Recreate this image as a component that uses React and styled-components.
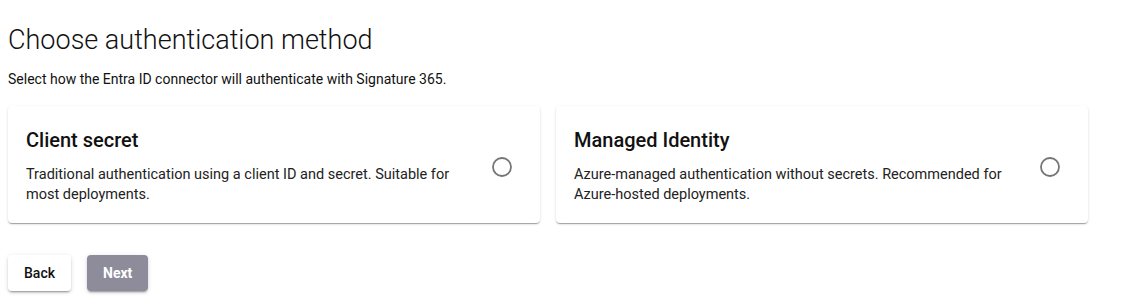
import React, { useState } from "react";
import styled, { createGlobalStyle } from "styled-components";

const GlobalStyle = createGlobalStyle`
  body {
    margin: 0;
    background: #ffffff;
    font-family: Roboto, "Liberation Sans", Arial, sans-serif;
    color: #111111;
  }
`;

const methods = [
  {
    id: "secret",
    title: "Client secret",
    text: "Traditional authentication using a client ID and secret. Suitable for most deployments.",
  },
  {
    id: "managed",
    title: "Managed Identity",
    text: "Azure-managed authentication without secrets. Recommended for Azure-hosted deployments.",
  },
];

const App = () => {
  const [selected, setSelected] = useState(null);

  return (
    <>
      <GlobalStyle />
      <Page>
        <Heading>Choose authentication method</Heading>
        <Intro>
          Select how the Entra ID connector will authenticate with Signature
          365.
        </Intro>
        <Cards>
          {methods.map((m) => (
            <Card key={m.id} onClick={() => setSelected(m.id)}>
              <CardBody>
                <CardTitle>{m.title}</CardTitle>
                <CardText>{m.text}</CardText>
              </CardBody>
              <Radio>
                <svg width="20" height="20" viewBox="0 0 20 20">
                  <circle
                    cx="10"
                    cy="10"
                    r="9"
                    fill="none"
                    stroke="#757575"
                    strokeWidth="1.8"
                  />
                  {selected === m.id && (
                    <circle cx="10" cy="10" r="5" fill="#757575" />
                  )}
                </svg>
              </Radio>
            </Card>
          ))}
        </Cards>
        <Actions>
          <Button>Back</Button>
          <Button primary disabled={!selected}>
            Next
          </Button>
        </Actions>
      </Page>
    </>
  );
};

const Page = styled.div`
  padding: 24px 8px 16px;
  width: 1080px;
`;
const Heading = styled.h1`
  margin: 0;
  font-size: 27px;
  font-weight: 300;
  line-height: 33px;
  color: #111;
`;
const Intro = styled.p`
  margin: 12px 0 0;
  font-size: 14px;
  line-height: 20px;
  color: #111;
`;
const Cards = styled.div`
  display: grid;
  grid-template-columns: 1fr 1fr;
  gap: 16px;
  margin-top: 17px;
`;
const Card = styled.div`
  display: flex;
  align-items: center;
  background: #fff;
  border-radius: 4px;
  padding: 22px 28px 18px 18px;
  box-shadow: 0 2px 1px -1px rgba(0, 0, 0, 0.2), 0 1px 1px 0 rgba(0, 0, 0, 0.14),
    0 1px 3px 0 rgba(0, 0, 0, 0.12);
  cursor: pointer;
`;
const CardBody = styled.div`
  flex: 1;
  padding-right: 20px;
`;
const CardTitle = styled.div`
  font-size: 20px;
  font-weight: 500;
  line-height: 24px;
  color: #111;
`;
const CardText = styled.div`
  margin-top: 13px;
  font-size: 14.5px;
  line-height: 20px;
  color: #222;
`;
const Radio = styled.span`
  display: flex;
  width: 20px;
  height: 20px;
`;
const Actions = styled.div`
  display: flex;
  gap: 16px;
  margin-top: 32px;
`;
const Button = styled.button`
  height: 36px;
  padding: 0 16px;
  border: none;
  border-radius: 4px;
  font-family: Roboto, "Liberation Sans", Arial, sans-serif;
  font-size: 14px;
  font-weight: ${(p) => (p.primary ? 700 : 500)};
  color: ${(p) => (p.primary ? "#ffffff" : "#111111")};
  background: ${(p) => (p.primary ? "#8e8c9b" : "#ffffff")};
  box-shadow: 0 3px 1px -2px rgba(0, 0, 0, 0.2), 0 2px 2px 0 rgba(0, 0, 0, 0.14),
    0 1px 5px 0 rgba(0, 0, 0, 0.12);
  cursor: pointer;
`;

export default App;
